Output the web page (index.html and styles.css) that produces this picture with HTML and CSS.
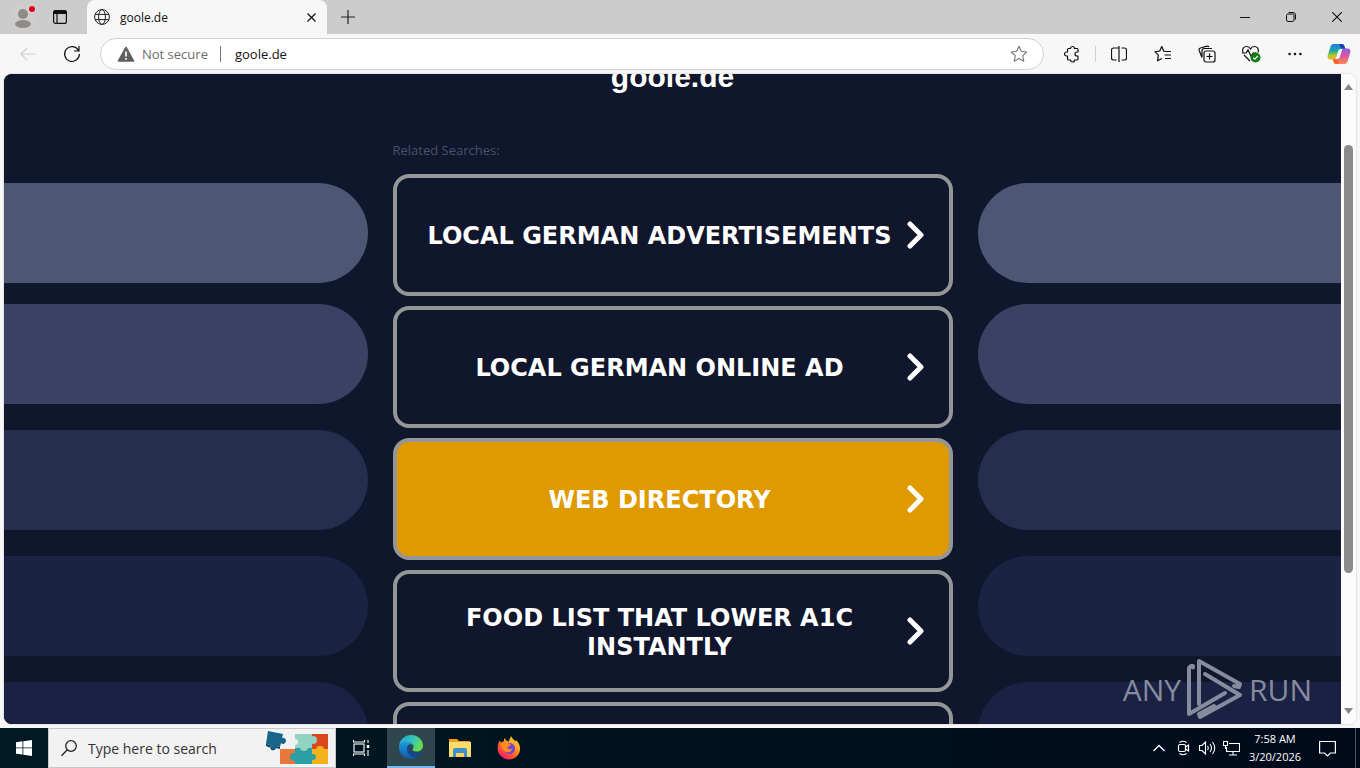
FILE: index.html
```html
<!DOCTYPE html>
<html lang="en">

<head>
    <meta charset="UTF-8">
    <meta name="viewport" content="width=device-width, initial-scale=1.0">
    <title>goole.de</title>
    <link rel="stylesheet" href="styles.css">
</head>

<body>
    <header class="titlebar">
        <button class="title-btn profile" aria-label="Profile">
            <svg width="26" height="26" viewBox="0 0 26 26">
                <circle cx="13" cy="13" r="12" fill="#d0cecc"/>
                <circle cx="13" cy="10" r="5" fill="#8f8b88"/>
                <ellipse cx="13" cy="20" rx="8" ry="4" fill="#8f8b88"/>
                <circle cx="22" cy="5" r="4" fill="#e8d0d0"/>
                <circle cx="22" cy="5" r="3" fill="#d40018"/>
            </svg>
        </button>
        <button class="title-btn" aria-label="Workspaces">
            <svg width="16" height="16" viewBox="0 0 16 16">
                <rect x="1.6" y="1.6" width="12.8" height="12.8" rx="2" fill="none" stroke="#111" stroke-width="1.2"/>
                <path d="M1.5 5V3a2 2 0 0 1 2-2h9a2 2 0 0 1 2 2v2z" fill="#111"/>
                <path d="M5 5v9" stroke="#111" stroke-width="1.2"/>
            </svg>
        </button>
        <div class="tab">
            <svg width="16" height="16" viewBox="0 0 16 16" fill="none" stroke="#222">
                <circle cx="8" cy="8" r="7.4"/>
                <ellipse cx="8" cy="8" rx="3.4" ry="7.4"/>
                <path d="M1.2 5.4h13.6M1.2 10.6h13.6"/>
            </svg>
            <span class="tab-title">goole.de</span>
            <button class="tab-close" aria-label="Close tab">
                <svg width="9" height="9" viewBox="0 0 9 9"><path d="M.5.5l8 8M8.5.5l-8 8" stroke="#111" stroke-width="1.2"/></svg>
            </button>
        </div>
        <button class="title-btn new-tab" aria-label="New tab">
            <svg width="14" height="14" viewBox="0 0 14 14"><path d="M7 0v14M0 7h14" stroke="#222" stroke-width="1.2"/></svg>
        </button>
        <div class="window-controls">
            <button aria-label="Minimize">
                <svg width="10" height="10" viewBox="0 0 10 10"><path d="M0 5.5h10" stroke="#111"/></svg>
            </button>
            <button aria-label="Restore">
                <svg width="10" height="10" viewBox="0 0 10 10" fill="none" stroke="#111">
                    <rect x=".5" y="2" width="7.5" height="7.5" rx="1.5"/>
                    <path d="M2.5.5H7A2.5 2.5 0 0 1 9.5 3v4.5"/>
                </svg>
            </button>
            <button aria-label="Close">
                <svg width="10" height="10" viewBox="0 0 10 10"><path d="M0 0l10 10M10 0L0 10" stroke="#111" stroke-width="1.1"/></svg>
            </button>
        </div>
    </header>

    <nav class="toolbar">
        <button class="tool" aria-label="Back" disabled>
            <svg width="16" height="14" viewBox="0 0 16 14" fill="none" stroke="#d0d0d0" stroke-width="1.2"><path d="M16 7H1M7 1L1 7l6 6"/></svg>
        </button>
        <button class="tool" aria-label="Refresh">
            <svg width="18" height="18" viewBox="0 0 18 18" fill="none" stroke="#111" stroke-width="1.2"><path d="M15.5 5.5A7.4 7.4 0 1 0 16.4 9M16 1v5h-5"/></svg>
        </button>
        <div class="address">
            <svg width="18" height="16" viewBox="0 0 18 16">
                <path d="M9 1.5L16.5 15h-15z" fill="#5f5f5f" stroke="#5f5f5f" stroke-width="1.6" stroke-linejoin="round"/>
                <path d="M9 5.5v5M9 12v1.7" stroke="#fff" stroke-width="1.7"/>
            </svg>
            <span class="not-secure">Not secure</span>
            <input class="url" type="text" value="goole.de" aria-label="Address">
            <button class="star" aria-label="Add to favorites">
                <svg width="18" height="18" viewBox="0 0 18 18" fill="none" stroke="#777" stroke-width="1.1" stroke-linejoin="round"><path d="M9 1.3l2.3 5 5.4.7-4 3.7 1.1 5.5L9 13.5l-4.8 2.7 1.1-5.5-4-3.7 5.4-.7z"/></svg>
            </button>
        </div>
        <button class="tool" aria-label="Extensions">
            <svg width="18" height="18" viewBox="0 0 18 18" fill="none" stroke="#111" stroke-width="1.2" stroke-linejoin="round"><path d="M5.5 3.5h2a2 2 0 0 1 4 0H14a1 1 0 0 1 1 1V7h-1a2 2 0 0 0 0 4h1v3a1 1 0 0 1-1 1h-2.5a2 2 0 0 1-4 0h-2a1 1 0 0 1-1-1v-3H3.5a2 2 0 0 1 0-4h1V4.5a1 1 0 0 1 1-1z"/></svg>
        </button>
        <span class="divider"></span>
        <button class="tool" aria-label="Split screen">
            <svg width="16" height="16" viewBox="0 0 16 16" fill="none" stroke="#111" stroke-width="1.2"><path d="M8 0v16M8 2H2.500a2 2 0 0 0-2 2v8a2 2 0 0 0 2 2h3M10.500 2h3a2 2 0 0 1 2 2v8a2 2 0 0 1-2 2h-3"/></svg>
        </button>
        <button class="tool" aria-label="Favorites">
            <svg width="18" height="18" viewBox="0 0 18 18" fill="none" stroke="#111" stroke-width="1.2" stroke-linejoin="round"><path d="M11.5 6.5l-1.8-.4L7.8 1.5 5.7 6 1 6.8l3.4 3.4-.9 5.6L8 13.5M11 6.5h6M10.5 10h6.5M11 13.5h6"/></svg>
        </button>
        <button class="tool" aria-label="Collections">
            <svg width="18" height="18" viewBox="0 0 18 18" fill="none" stroke="#111" stroke-width="1.2"><rect x="6" y="6" width="11" height="11" rx="2"/><path d="M11.5 8.5v6M8.5 11.5h6M4 12.5L1.2 5.500a2 2 0 0 1 1.200-2.500L9 1.200a2 2 0 0 1 2 .8M14 3.500H6.500A2.500 2.500 0 0 0 4 6v6.500"/></svg>
        </button>
        <button class="tool" aria-label="Browser essentials">
            <svg width="20" height="18" viewBox="0 0 20 18" fill="none" stroke="#111" stroke-width="1.2"><path d="M2 7.5C.5 4 3 1.500 5.500 1.500c2 0 3.500 1.500 4 2.500.5-1 2-2.500 4-2.500 2.500 0 5 2.500 3.500 6M3 10l6 6M1 8h4l2-3 3 6 2-3h3"/><circle cx="14.500" cy="12.500" r="5" fill="#127a16" stroke="none"/><path d="M12.300 12.600l1.600 1.600 3-3.200" stroke="#fff"/></svg>
        </button>
        <button class="tool" aria-label="Settings and more">
            <svg width="14" height="4" viewBox="0 0 14 4" fill="#111"><circle cx="1.6" cy="2" r="1.3"/><circle cx="7" cy="2" r="1.3"/><circle cx="12.4" cy="2" r="1.3"/></svg>
        </button>
        <button class="tool copilot" aria-label="Copilot">
            <svg width="24" height="22" viewBox="0 0 24 22">
                <defs>
                    <linearGradient id="cp1" x1="0" y1="0" x2="0" y2="1"><stop offset="0" stop-color="#1b7fe0"/><stop offset=".45" stop-color="#1fa8a0"/><stop offset=".75" stop-color="#b5c92c"/><stop offset="1" stop-color="#f2b31d"/></linearGradient>
                    <linearGradient id="cp2" x1="0" y1="0" x2="0" y2="1"><stop offset="0" stop-color="#8b5be8"/><stop offset=".5" stop-color="#e0569c"/><stop offset="1" stop-color="#fb8a4b"/></linearGradient>
                </defs>
                <path d="M6.500 1h8.500c1.500 0 2 1 2.500 2.500L18.500 6H14c-2 0-2.600 1-3.200 3L9.300 14c-.6 2-1.300 2.500-3 2.500H4c-3 0-4-2-3.200-4.500L3.500 3.500C4 2 5 1 6.500 1z" fill="url(#cp1)"/>
                <path d="M17.500 21H9c-1.500 0-2-1-2.500-2.500L5.700 16H10c2 0 2.600-1 3.200-3l1.500-5c.6-2 1.300-2.500 3-2.500H20c3 0 4 2 3.200 4.500l-2.700 8.500C20 20 19 21 17.500 21z" fill="url(#cp2)"/>
                <path d="M12 1h3c1.500 0 2 1 2.500 2.500l.8 2H14z" fill="#1c3fae"/>
                <path d="M6 16.400h5l1 4.600H9c-1.500 0-2-1-2.500-2.500z" fill="#f4642f"/>
            </svg>
        </button>
    </nav>

    <div class="viewport">
        <main class="page">
            <div class="stripes left">
                <div class="stripe"></div>
                <div class="stripe"></div>
                <div class="stripe"></div>
                <div class="stripe"></div>
                <div class="stripe"></div>
            </div>
            <section class="results">
                <h1>goole.de</h1>
                <p class="related">Related Searches:</p>
                <a class="card" href="#"><span>LOCAL GERMAN ADVERTISEMENTS</span>
                    <svg class="chevron" width="17" height="28" viewBox="0 0 17 28"><path d="M3 3l11 11L3 25"/></svg></a>
                <a class="card" href="#"><span>LOCAL GERMAN ONLINE AD</span>
                    <svg class="chevron" width="17" height="28" viewBox="0 0 17 28"><path d="M3 3l11 11L3 25"/></svg></a>
                <a class="card active" href="#"><span>WEB DIRECTORY</span>
                    <svg class="chevron" width="17" height="28" viewBox="0 0 17 28"><path d="M3 3l11 11L3 25"/></svg></a>
                <a class="card" href="#"><span>FOOD LIST THAT LOWER A1C INSTANTLY</span>
                    <svg class="chevron" width="17" height="28" viewBox="0 0 17 28"><path d="M3 3l11 11L3 25"/></svg></a>
                <a class="card" href="#" aria-label="More"></a>
            </section>
            <div class="stripes right">
                <div class="stripe"></div>
                <div class="stripe"></div>
                <div class="stripe"></div>
                <div class="stripe"></div>
                <div class="stripe"></div>
            </div>
        </main>
        <div class="scrollbar">
            <svg class="arrow" width="9" height="6" viewBox="0 0 9 6"><path d="M0 6l4.5-6L9 6z" fill="#858585"/></svg>
            <div class="track">
                <div class="thumb"></div>
            </div>
            <svg class="arrow" width="9" height="6" viewBox="0 0 9 6"><path d="M0 0l4.5 6L9 0z" fill="#858585"/></svg>
        </div>
        <div class="watermark">
            <span>ANY</span>
            <svg width="56" height="62" viewBox="0 0 56 62" fill="none" stroke="currentColor" stroke-width="4" stroke-linejoin="round" stroke-linecap="round">
                <path d="M6 9.5V8H4L2 10v46l36-21"/>
                <path d="M12 46V3l41 23-1 3-5-1"/>
                <path d="M18 16l35 21-40 22-1-3 15-8"/>
            </svg>
            <span>RUN</span>
        </div>
    </div>

    <footer class="taskbar">
        <button class="start" aria-label="Start">
            <svg width="16" height="16" viewBox="0 0 16 16" fill="#fff"><path d="M0 2.200l6.500-.9v6.200H0zM7.300 1.200L16 0v7.500H7.300zM0 8.300h6.500v6.300L0 13.700zM7.300 8.300H16V16l-8.700-1.200z"/></svg>
        </button>
        <label class="search">
            <svg width="18" height="18" viewBox="0 0 18 18" fill="none" stroke="#222" stroke-width="1.3"><circle cx="10" cy="7" r="5.3"/><path d="M6.300 10.800L.5 16.800"/></svg>
            <input type="text" placeholder="Type here to search" aria-label="Search">
            <svg class="puzzle" width="64" height="36" viewBox="0 0 64 36">
                <path d="M14 19h15v15H14z" fill="#e8773c"/>
                <path d="M29 4h18v15H29z" fill="#93d3c4"/>
                <path d="M46 4h16v16H46z" fill="#d9481f"/>
                <path d="M29 18h18v16H29z" fill="#2b9fa6"/>
                <path d="M46 19h16v15H46z" fill="#f3b21b"/>
                <circle cx="38" cy="17" r="4" fill="#93d3c4"/>
                <circle cx="47" cy="10" r="4" fill="#93d3c4"/>
                <circle cx="28" cy="27" r="4" fill="#2b9fa6"/>
                <circle cx="54" cy="20" r="4" fill="#f3b21b"/>
                <circle cx="47" cy="27" r="3" fill="#2b9fa6"/>
                <circle cx="29" cy="12" r="3" fill="#f0f0f0"/>
                <path d="M2 1l15 3-1 4a3 3 0 1 1-1 5l-1 4-4-1a3 3 0 1 1-5-1L0 14z" fill="#17658a"/>
                <path d="M0 14l5 1a3 3 0 1 0 5 1l4 1v2l-4-1a3 3 0 0 1-5 0l-5-2z" fill="#0d4663"/>
            </svg>
        </label>
        <button class="task view" aria-label="Task View">
            <svg width="17" height="16" viewBox="0 0 17 16" fill="none" stroke="#fff" stroke-width="1.1"><rect x="1" y="4" width="10" height="8"/><path d="M.5 0v2h11V0M.5 16v-2h11v2M15 0v3M15 10v6"/><path d="M13.700 5h2.600v3h-2.600z" fill="#fff" stroke="none"/></svg>
        </button>
        <button class="task open" aria-label="Microsoft Edge">
            <svg width="24" height="24" viewBox="0 0 24 24">
                <defs>
                    <linearGradient id="eg1" x1="0" y1="0" x2="1" y2=".4"><stop offset="0" stop-color="#249fd6"/><stop offset=".6" stop-color="#35c7b6"/><stop offset="1" stop-color="#63dc4f"/></linearGradient>
                    <linearGradient id="eg2" x1="0" y1="0" x2="0" y2="1"><stop offset="0" stop-color="#1ba0e0"/><stop offset="1" stop-color="#1156a8"/></linearGradient>
                </defs>
                <path d="M0 11C1 4 6 0 12 0c7 0 12 5 12 10.500 0 4-3 6-6.500 6-2.500 0-4-1-4-2 0-.7 1-1.200 1-3 0-2.500-2.500-4.500-6-4.500C4.500 7 1 9 0 11z" fill="url(#eg1)"/>
                <path d="M0 12c0-3 3.500-5.500 8-5.500 4 0 6.500 2.500 6.500 5 0-1.500-1.500-2.500-3-2.300C9 9.500 8 12 8 14c0 4.500 4 9 9 8.500C15.500 23.500 14 24 12 24 5 24 0 18.500 0 12z" fill="url(#eg2)"/>
                <path d="M8 14c0-2 .6-3.600 2-4.500-.7 5 3 8.500 8 8.500 2 0 3.500-.6 4.500-1 .4-.1.600.1.400.5C21.500 20 19.500 21.700 17 22.500 12 23 8 18.500 8 14z" fill="#11498f"/>
            </svg>
        </button>
        <button class="task" aria-label="File Explorer">
            <svg width="22" height="20" viewBox="0 0 22 20"><path d="M0 1h8l2 2h11v3H0z" fill="#e9a01f"/><path d="M0 4h22v15H0z" fill="#fddc6c"/><path d="M4 19v-7a2 2 0 0 1 2-2h10a2 2 0 0 1 2 2v7h-3v-4H7v4z" fill="#3f8fcf"/><path d="M7 15h8v4H7z" fill="#fbd05a"/></svg>
        </button>
        <button class="task" aria-label="Firefox">
            <svg width="24" height="24" viewBox="0 0 24 24">
                <defs><linearGradient id="ff" x1=".9" y1="0" x2=".2" y2="1"><stop offset="0" stop-color="#ffe34a"/><stop offset=".4" stop-color="#ff9a1f"/><stop offset=".75" stop-color="#ff4438"/><stop offset="1" stop-color="#e31587"/></linearGradient></defs>
                <path d="M3 4c0 1 .3 2 1 2.500L7 5c0-1.500 0-2.500.700-3 .5 2 2 3 4 3.500L14 0c1 2.500 3 3.500 4.500 5.500L19 4c3 3 4.500 6 4 10-.7 5.500-5.500 9.500-11 9.500S1 19 .7 13.500C.5 9.500 1.500 6.500 3 4z" fill="url(#ff)"/>
                <circle cx="12.5" cy="12.5" r="5.5" fill="#7542d8"/>
                <path d="M4 7c3-2 6-1 7 .5 1.500.2 3 .5 3 1.300-1 1.700-3 1.500-3.500 2.700 1 2.500 3.500 2 5 1-1 4-6 5-9 2C4.500 12.500 3.500 10 4 7z" fill="#ff8a20"/>
            </svg>
        </button>
        <div class="tray">
            <button aria-label="Show hidden icons"><svg width="12" height="8" viewBox="0 0 12 8" fill="none" stroke="#fff" stroke-width="1.3"><path d="M.5 7L6 1.500 11.500 7"/></svg></button>
            <button aria-label="Meet Now"><svg width="14" height="16" viewBox="0 0 14 16" fill="none" stroke="#fff" stroke-width="1.2"><rect x="2.5" y="4.5" width="7" height="7" rx="1.5"/><path d="M9.500 7l3-2v6l-3-2M3.500 2.500Q7 0 10.500 2.500M3.500 13.500Q7 16 10.500 13.500"/></svg></button>
            <button aria-label="Volume"><svg width="17" height="14" viewBox="0 0 17 14" fill="none" stroke="#fff" stroke-width="1.1"><path d="M.5 4.500h2.500L6.500 1v12L3 9.500H.5zM8.500 5q1.500 2 0 4M11 3q3 4 0 8M13.500 1q4.500 6 0 12"/></svg></button>
            <button aria-label="Network"><svg width="17" height="15" viewBox="0 0 17 15" fill="none" stroke="#fff" stroke-width="1.1"><path d="M6 2.500h10.500v8h-13V6M10 10.500v3.500M6 14h8M.5.5h4v4h-4zM2.500 4.500V8"/></svg></button>
            <div class="clock">
                <span>7:58 AM</span>
                <span>3/20/2026</span>
            </div>
            <button class="notify" aria-label="Notifications"><svg width="17" height="17" viewBox="0 0 17 17" fill="none" stroke="#fff" stroke-width="1.2"><path d="M.6 1.500h15.800v11.500h-5L8.500 16l-3-3H.6z"/></svg></button>
            <span class="show-desktop"></span>
        </div>
    </footer>
</body>

</html>
```
FILE: styles.css
```css
* {
    box-sizing: border-box;
}

body {
    margin: 0;
    height: 100vh;
    display: flex;
    flex-direction: column;
    overflow: hidden;
    background-color: #f7f7f7;
    font-family: "Open Sans", "Noto Sans", sans-serif;
    font-size: 12px;
    color: #111;
}

button {
    display: flex;
    align-items: center;
    justify-content: center;
    padding: 0;
    border: 0;
    background: none;
}

svg {
    display: block;
    flex: none;
}

input {
    border: 0;
    padding: 0;
    background: none;
    min-width: 0;
    font-family: inherit;
    outline: none;
}

/* tab strip */
.titlebar {
    flex: none;
    display: flex;
    height: 34px;
    padding-left: 4px;
    background-color: #cccccc;
}

.title-btn {
    width: 36px;
    height: 34px;
}

.title-btn.profile {
    width: 38px;
}

.title-btn.new-tab {
    width: 42px;
}

.tab {
    display: flex;
    align-items: center;
    width: 240px;
    margin-left: 9px;
    padding: 0 11px 0 7px;
    background-color: #f7f7f7;
    border-radius: 8px 8px 0 0;
}

.tab-title {
    flex: 1;
    margin-left: 10px;
    font-size: 12px;
}

.window-controls {
    display: flex;
    margin-left: auto;
}

.window-controls button {
    width: 46px;
    height: 34px;
}

/* address row */
.toolbar {
    flex: none;
    display: flex;
    align-items: center;
    height: 40px;
    padding-left: 6px;
}

.tool {
    width: 44px;
    height: 32px;
}

.tool.copilot {
    width: 43px;
}

.address {
    flex: 1;
    display: flex;
    align-items: center;
    height: 32px;
    margin: 0 6px;
    padding: 0 15px 0 16px;
    background-color: #fff;
    border: 1px solid #d2d2d2;
    border-radius: 16px;
}

.not-secure {
    margin-left: 7px;
    padding-right: 12px;
    border-right: 1px solid #777;
    line-height: 16px;
    font-size: 13px;
    color: #6b6b6b;
}

.url {
    flex: 1;
    margin-left: 14px;
    font-size: 13px;
    color: #111;
}

.divider {
    width: 1px;
    height: 16px;
    margin: 0 1px;
    background-color: #d0d0d0;
}

/* visible part of the page */
.viewport {
    position: relative;
    flex: 1;
    min-height: 0;
    display: flex;
    margin: 0 4px 4px;
    border-radius: 8px;
    overflow: hidden;
    background: linear-gradient(to right, #10162b 50%, #fcfcfc 50%);
    box-shadow: 0 0 2px #bbb;
}

.page {
    flex: 1;
    display: grid;
    grid-template-columns: 1fr 560px 1fr;
    column-gap: 25px;
    overflow: hidden;
    background-color: #10162b;
}

.stripes {
    padding-top: 109px;
}

.stripe {
    height: 100px;
    margin-bottom: 26px;
}

.left .stripe {
    border-radius: 0 50px 50px 0;
}

.right .stripe {
    border-radius: 50px 0 0 50px;
}

.stripe:nth-child(1) {
    margin-bottom: 21px;
    background-color: #4d5672;
}

.stripe:nth-child(2) {
    background-color: #3b4162;
}

.stripe:nth-child(3) {
    background-color: #262e4e;
}

.stripe:nth-child(4) {
    background-color: #1b2343;
}

.stripe:nth-child(5) {
    background-color: #1a2142;
}

.results {
    display: flex;
    flex-direction: column;
}

h1 {
    margin: -14px 0 47px;
    text-align: center;
    font-family: Arial, "Liberation Sans", sans-serif;
    font-size: 30px;
    line-height: 34px;
    color: #fff;
}

.related {
    margin: 0 0 15px;
    font-size: 13px;
    line-height: 18px;
    color: #4b506a;
}

.card {
    flex: none;
    display: flex;
    align-items: center;
    gap: 10px;
    height: 122px;
    margin-bottom: 10px;
    padding: 0 25px 0 26px;
    border: 4px solid #949698;
    border-radius: 16px;
    color: #fff;
    font-family: Verdana, "DejaVu Sans", sans-serif;
    font-size: 24px;
    font-weight: bold;
    line-height: 29px;
    text-align: center;
    text-decoration: none;
}

.card span {
    flex: 1;
    padding-top: 3px;
}

.card.active {
    background-color: #df9a00;
}

.chevron {
    fill: none;
    stroke: #fff;
    stroke-width: 5;
    stroke-linecap: round;
    stroke-linejoin: round;
}

.scrollbar {
    display: flex;
    flex-direction: column;
    align-items: center;
    width: 15px;
    padding: 10px 0;
    background-color: #fcfcfc;
}

.track {
    flex: 1;
    width: 9px;
    padding-top: 55px;
}

.thumb {
    height: 76%;
    border-radius: 5px;
    background-color: #8b8b8b;
}

.watermark {
    position: absolute;
    right: 44px;
    bottom: 4px;
    display: flex;
    align-items: center;
    gap: 6px;
    color: #868b9e;
    font-family: "Open Sans", sans-serif;
    font-size: 30px;
    font-weight: 400;
}

/* taskbar */
.taskbar {
    flex: none;
    display: flex;
    height: 40px;
    background: linear-gradient(to right, #001a23, #000a1a);
    color: #fff;
}

.start {
    width: 48px;
}

.task {
    width: 49px;
}

.task.view {
    width: 51px;
}

.task.open {
    width: 48px;
    background-color: #30464f;
    border-bottom: 2px solid #76b9ed;
}

.search {
    display: flex;
    align-items: center;
    width: 288px;
    padding: 0 5px 0 12px;
    background-color: #f2f2f2;
    border: 1px solid #c8c8c8;
}

.search input {
    flex: 1;
    margin-left: 9px;
    font-size: 14px;
}

.search input::placeholder {
    color: #333;
    opacity: 1;
}

.tray {
    display: flex;
    margin-left: auto;
}

.tray button {
    width: 24px;
}

.clock {
    display: flex;
    flex-direction: column;
    justify-content: center;
    width: 64px;
    text-align: center;
    font-size: 11px;
    line-height: 18px;
}

.tray .notify {
    width: 40px;
}

.show-desktop {
    width: 5px;
    margin-left: 8px;
    border-left: 1px solid #4b5560;
}
```
